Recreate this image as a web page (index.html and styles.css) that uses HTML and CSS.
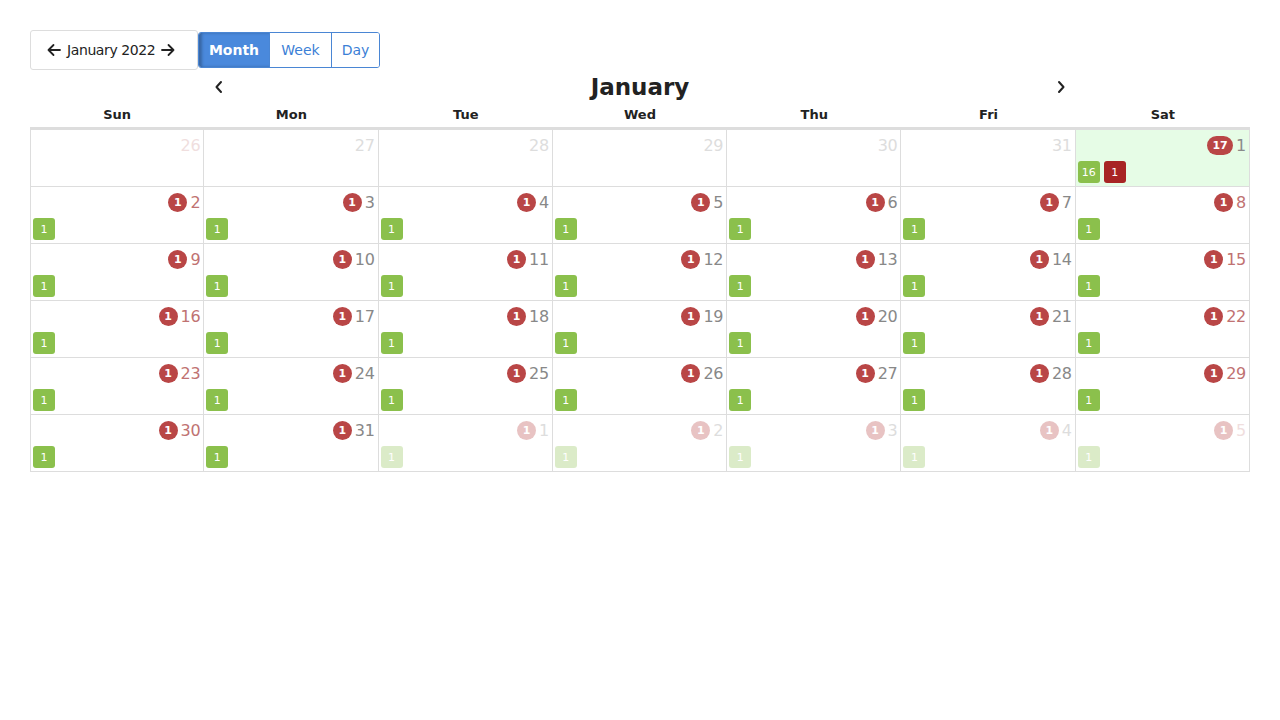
FILE: index.html
```html
<!DOCTYPE html>
<html>
<head>
<meta charset="utf-8">
<link rel="stylesheet" href="styles.css">
</head>
<body>
<div class="toolbar">
  <div class="nav">
    <svg class="arrow" viewBox="0 0 16 16" width="16" height="16"><path d="M14 8H2.5M7.5 3L2.5 8l5 5" fill="none" stroke="#222" stroke-width="1.8" stroke-linecap="round" stroke-linejoin="round"/></svg>
    <span class="nav-label">January 2022</span>
    <svg class="arrow" viewBox="0 0 16 16" width="16" height="16"><path d="M2 8h11.5M8.5 3l5 5-5 5" fill="none" stroke="#222" stroke-width="1.8" stroke-linecap="round" stroke-linejoin="round"/></svg>
  </div>
  <div class="views">
    <button class="view active">Month</button>
    <button class="view">Week</button>
    <button class="view">Day</button>
  </div>
</div>
<div class="titlebar">
  <svg viewBox="0 0 10 14" width="10" height="14"><path d="M7 2L2.5 7 7 12" fill="none" stroke="#222" stroke-width="2" stroke-linecap="round" stroke-linejoin="round"/></svg>
  <h1 class="title">January</h1>
  <svg viewBox="0 0 10 14" width="10" height="14"><path d="M3 2l4.5 5L3 12" fill="none" stroke="#222" stroke-width="2" stroke-linecap="round" stroke-linejoin="round"/></svg>
</div>
<div class="calendar" id="cal">
  <div class="dow">Sun</div><div class="dow">Mon</div><div class="dow">Tue</div><div class="dow">Wed</div><div class="dow">Thu</div><div class="dow">Fri</div><div class="dow">Sat</div>
</div>
<script src="app.js"></script>
</body>
</html>
```
FILE: styles.css
```css
* { box-sizing: border-box; }
body {
  margin: 0;
  padding: 30px;
  font-family: "DejaVu Sans", "Open Sans", sans-serif;
  color: #222;
  background: #fff;
}
.toolbar {
  display: flex;
  align-items: center;
  height: 40px;
}
.nav {
  display: flex;
  align-items: center;
  gap: 5px;
  height: 40px;
  width: 168px;
  padding: 0 0 0 15px;
  border: 1px solid #ddd;
  border-radius: 3px;
}
.nav-label { font-size: 14px; letter-spacing: -0.4px; white-space: nowrap; }
.views {
  display: flex;
  height: 36px;
  border: 1px solid #4a86d4;
  border-radius: 3px;
  overflow: hidden;
}
.view {
  font-family: inherit;
  font-size: 14px;
  color: #3c7fd6;
  background: #fff;
  border: 0;
  border-left: 1px solid #4a86d4;
  padding: 0;
  height: 34px;
}
.view:nth-child(1) { width: 70px; border-left: 0; }
.view:nth-child(2) { width: 62px; }
.view:nth-child(3) { width: 48px; }
.view.active {
  background: #4a89dc;
  color: #fff;
  font-weight: bold;
  box-shadow: inset 3px 0 3px rgba(0,0,0,0.25);
}
.titlebar {
  display: flex;
  justify-content: space-between;
  align-items: center;
  width: 852px;
  margin: 2px auto 0;
  height: 30px;
}
.title {
  margin: 0;
  font-size: 23px;
  font-weight: bold;
  line-height: 28px;
  color: #222;
}
.calendar {
  display: grid;
  grid-template-columns: repeat(7, 1fr);
  width: 1220px;
}
.dow {
  font-size: 13px;
  font-weight: bold;
  text-align: center;
  height: 28px;
  line-height: 24px;
  padding-top: 1px;
  border-bottom: 3px solid #ddd;
}
.cell {
  height: 57px;
  border-right: 1px solid #ddd;
  border-bottom: 1px solid #ddd;
  padding: 2px 3px 0 2px;
  display: flex;
  flex-direction: column;
}
.cell.first { border-left: 1px solid #ddd; }
.cell.today { background: #e6fce6; }
.head {
  display: flex;
  justify-content: flex-end;
  align-items: center;
  height: 27px;
  gap: 3px;
}
.num {
  font-size: 16px;
  color: #888;
  letter-spacing: -0.3px;
}
.cell.weekend .num { color: #c07272; }
.cell.today .num { color: #8a8a8a; }
.cell.other .num { color: #ddd; }
.cell.other.weekend .num { color: #f0dede; }
.badge {
  min-width: 19px;
  height: 19px;
  border-radius: 10px;
  background: #b94646;
  color: #fff;
  font-size: 11px;
  font-weight: bold;
  display: flex;
  align-items: center;
  justify-content: center;
  padding: 0 4px;
}
.cell.today .badge { min-width: 26px; }
.cell.other .badge { opacity: 0.32; }
.events {
  display: flex;
  gap: 4px;
  margin-top: 2px;
}
.ev {
  width: 22px;
  height: 22px;
  border-radius: 3px;
  background: #8bc04c;
  color: #fff;
  font-size: 11px;
  display: flex;
  align-items: center;
  justify-content: center;
}
.ev.red { background: #a82424; }
.cell.other .ev { opacity: 0.3; }
```
FILE: app.js
```js
var cal = document.getElementById('cal');
var days = [];
for (var d = 26; d <= 31; d++) days.push({ n: d, other: true, empty: true });
for (var d = 1; d <= 31; d++) days.push({ n: d });
for (var d = 1; d <= 5; d++) days.push({ n: d, other: true });
days.forEach(function (day, i) {
  var c = document.createElement('div');
  var col = i % 7;
  c.className = 'cell' + (col === 0 ? ' first' : '') + ((col === 0 || col === 6) ? ' weekend' : '') + (day.other ? ' other' : '');
  if (!day.other && day.n === 1) c.className += ' today';
  var head = document.createElement('div');
  head.className = 'head';
  if (!day.empty) {
    var b = document.createElement('span');
    b.className = 'badge';
    b.textContent = (!day.other && day.n === 1) ? '17' : '1';
    head.appendChild(b);
  }
  var num = document.createElement('span');
  num.className = 'num';
  num.textContent = day.n;
  head.appendChild(num);
  c.appendChild(head);
  if (!day.empty) {
    var ev = document.createElement('div');
    ev.className = 'events';
    if (!day.other && day.n === 1) {
      ev.innerHTML = '<span class="ev">16</span><span class="ev red">1</span>';
    } else {
      ev.innerHTML = '<span class="ev">1</span>';
    }
    c.appendChild(ev);
  }
  cal.appendChild(c);
});
```
